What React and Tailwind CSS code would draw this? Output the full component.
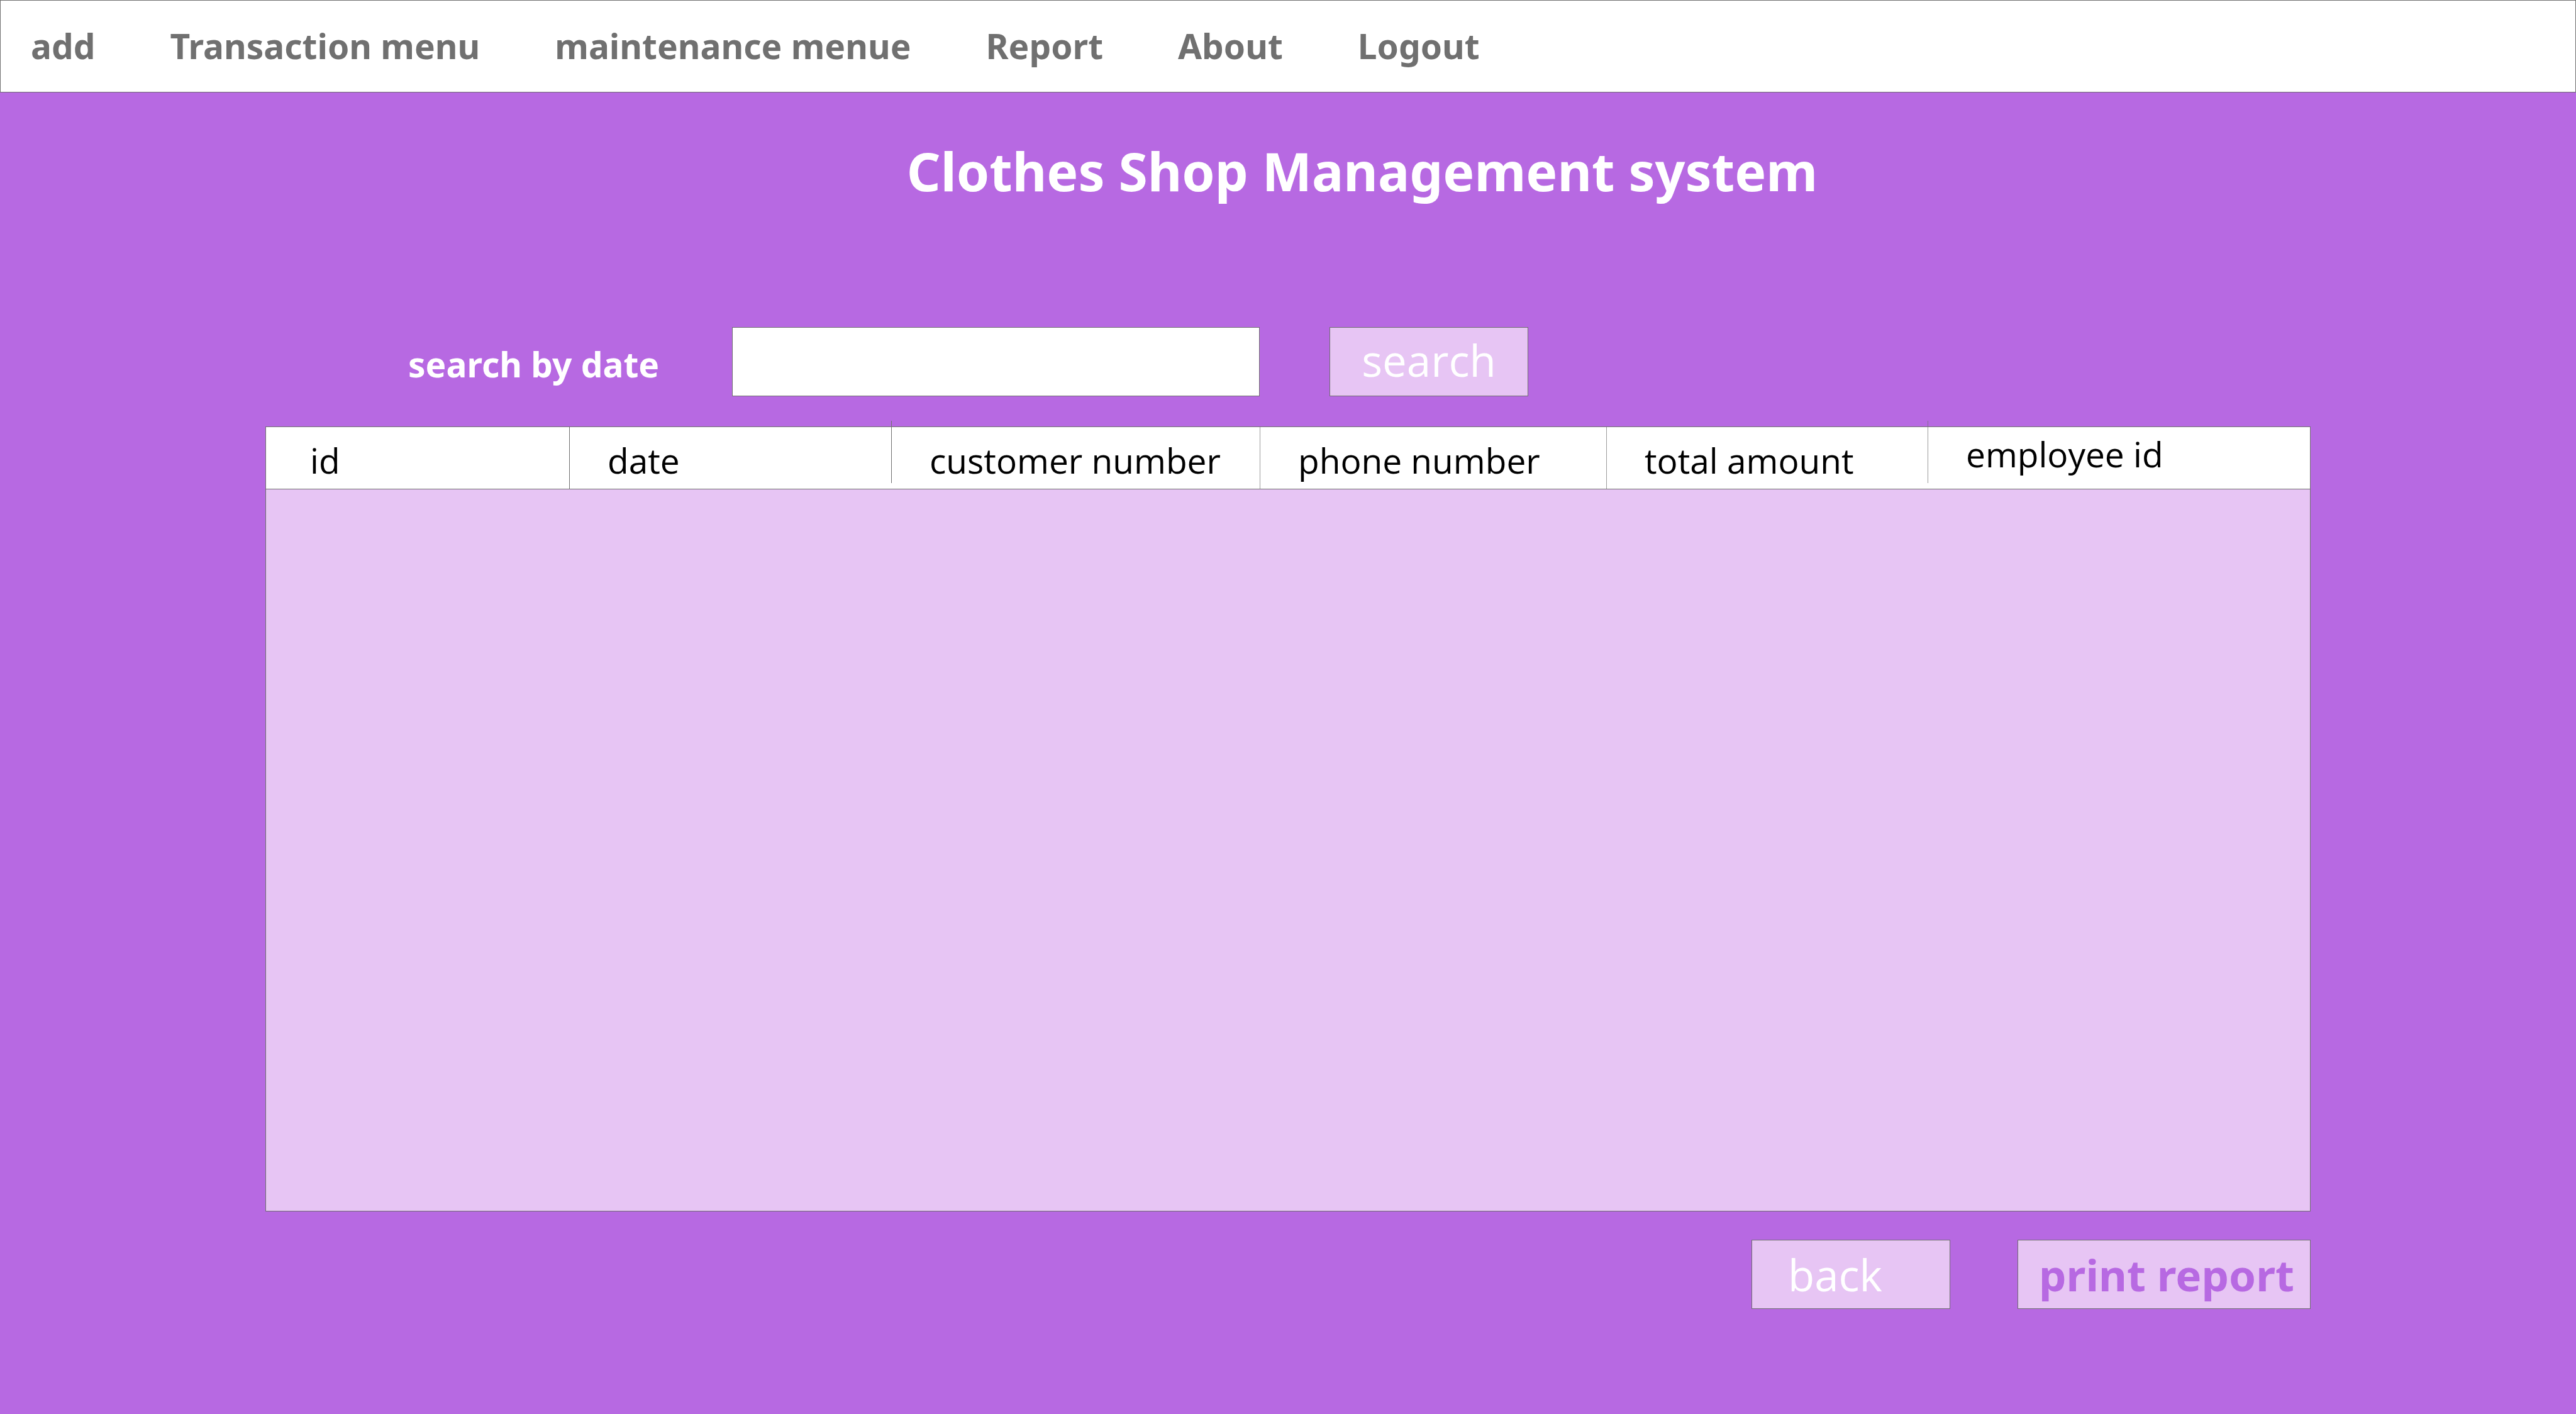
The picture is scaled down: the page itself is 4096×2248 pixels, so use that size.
const menu = ["add", "Transaction menu", "maintenance menue", "Report", "About", "Logout"];

const columns = [
  { label: "id", width: "w-[483px]", cell: "pl-[70px] pt-[6px]", rule: "top-0 bottom-0" },
  { label: "date", width: "w-[512px]", cell: "pl-[60px] pt-[6px]", rule: "-top-[10px] bottom-[10px]" },
  { label: "customer number", width: "w-[586px]", cell: "pl-[60px] pt-[6px]", rule: "top-0 bottom-0 opacity-70" },
  { label: "phone number", width: "w-[551px]", cell: "pl-[60px] pt-[6px]", rule: "top-0 bottom-0 opacity-70" },
  { label: "total amount", width: "w-[511px]", cell: "pl-[60px] pt-[6px]", rule: "-top-[10px] bottom-[10px] opacity-70" },
  { label: "employee id", width: "", cell: "pl-[60px] pb-[14px]", rule: "hidden" },
];

const button = "h-[110px] border border-[#707070] bg-[#e7c5f4] leading-[80px]";

export default function App() {
  return (
    <div className="flex min-h-screen flex-col bg-[#b769e2] font-['Noto_Sans',sans-serif] text-white">
      <nav className="flex h-[147px] items-center gap-[119px] border border-[#707070] bg-white px-12 pb-[2px] text-[55px] leading-[72px] font-bold text-[#707070]">
        {menu.map((m) => (
          <a key={m} href="#" className="whitespace-nowrap">
            {m}
          </a>
        ))}
      </nav>

      <h1 className="mt-[77px] pl-[236px] text-center text-[84px] leading-[96px] font-bold">
        Clothes Shop Management system
      </h1>

      <main className="flex grow flex-col px-[422px] pb-[167px]">
        <form className="mt-[200px] flex items-center pl-[227px]" onSubmit={(e) => e.preventDefault()}>
          <label htmlFor="search-date" className="w-[515px] pt-[8px] text-[55px] leading-[72px] font-bold">
            search by date
          </label>
          <input
            id="search-date"
            type="text"
            className="h-[110px] w-[839px] border border-[#707070] bg-white px-6 text-[55px] text-black outline-none"
          />
          <button type="submit" className={`${button} ml-[111px] w-[316px] pb-[6px] font-['Open_Sans',sans-serif] text-[69px]`}>
            search
          </button>
        </form>

        <div className="mt-[48px] flex grow flex-col border border-[#707070] bg-[#e7c5f4]">
          <table className="w-full table-fixed border-collapse text-left font-['Open_Sans',sans-serif] text-[55px] leading-[72px] text-black">
            <thead>
              <tr className="h-[99px] bg-white">
                {columns.map((c) => (
                  <th key={c.label} scope="col" className={`relative font-normal whitespace-nowrap shadow-[inset_0_-1px_0_#707070] ${c.width} ${c.cell}`}>
                    {c.label}
                    <span className={`absolute right-0 w-px bg-[#707070] ${c.rule}`} />
                  </th>
                ))}
              </tr>
            </thead>
            <tbody />
          </table>
        </div>

        <div className="mt-[45px] flex justify-end gap-[107px]">
          <button type="button" className={`${button} w-[316px] pl-[57px] text-left font-['Open_Sans',sans-serif] text-[69px]`}>
            back
          </button>
          <button type="button" className={`${button} w-[466px] pl-[33px] text-left text-[69px] font-bold whitespace-nowrap text-[#b769e2]`}>
            print report
          </button>
        </div>
      </main>
    </div>
  );
}
